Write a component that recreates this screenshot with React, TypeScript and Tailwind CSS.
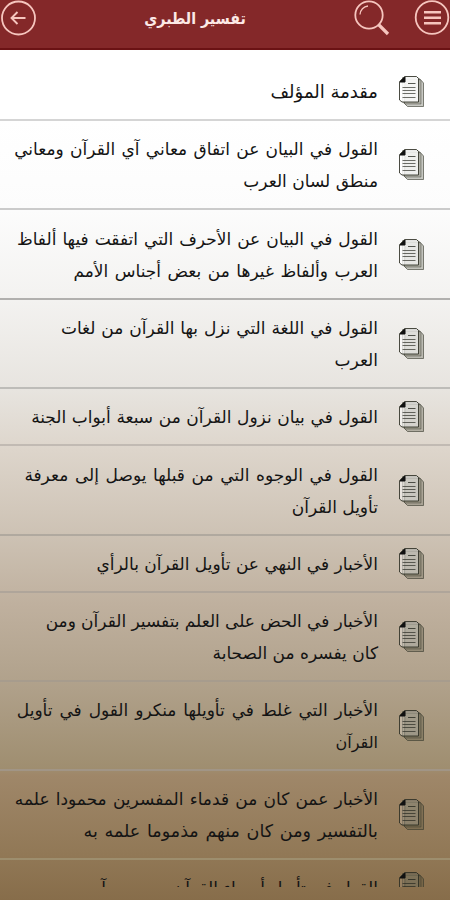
import React from 'react';

type Line = { text: string; className?: string };

type Chapter = {
  id: number;
  lines: Line[];
  height: string;
  border: string;
};

const chapters: Chapter[] = [
  {
    id: 1, height: 'h-[57px]', border: 'bg-[#cbcbcb]',
    lines: [{ text: 'مقدمة المؤلف', className: 'text-[18px]' }],
  },
  {
    id: 2, height: 'h-[89px]', border: 'bg-[#bebebe]',
    lines: [
      { text: 'القول في البيان عن اتفاق معاني آي القرآن ومعاني', className: '[word-spacing:0.9px]' },
      { text: 'منطق لسان العرب' },
    ],
  },
  {
    id: 3, height: 'h-[90px]', border: 'bg-[#a09f9e]',
    lines: [
      { text: 'القول في البيان عن الأحرف التي اتفقت فيها ألفاظ', className: '[word-spacing:0.6px]' },
      { text: 'العرب وألفاظ غيرها من بعض أجناس الأمم', className: '[word-spacing:1.1px]' },
    ],
  },
  {
    id: 4, height: 'h-[89px]', border: 'bg-[#b3b1ae]',
    lines: [
      { text: 'القول في اللغة التي نزل بها القرآن من لغات', className: '[word-spacing:0.5px]' },
      { text: 'العرب' },
    ],
  },
  {
    id: 5, height: 'h-[57px]', border: 'bg-[#b9b3ac]',
    lines: [{ text: 'القول في بيان نزول القرآن من سبعة أبواب الجنة', className: '[word-spacing:0.2px]' }],
  },
  {
    id: 6, height: 'h-[90px]', border: 'bg-[#a9a29a]',
    lines: [
      { text: 'القول في الوجوه التي من قبلها يوصل إلى معرفة', className: '[word-spacing:1.2px]' },
      { text: 'تأويل القرآن' },
    ],
  },
  {
    id: 7, height: 'h-[57px]', border: 'bg-[#aaa198]',
    lines: [{ text: 'الأخبار في النهي عن تأويل القرآن بالرأي' }],
  },
  {
    id: 8, height: 'h-[89px]', border: 'bg-[#a59b8d]',
    lines: [
      { text: 'الأخبار في الحض على العلم بتفسير القرآن ومن', className: '[word-spacing:-0.2px]' },
      { text: 'كان يفسره من الصحابة' },
    ],
  },
  {
    id: 9, height: 'h-[89px]', border: 'bg-[#a1978c]',
    lines: [
      { text: 'الأخبار التي غلط في تأويلها منكرو القول في تأويل', className: '[word-spacing:1.5px]' },
      { text: 'القرآن', className: 'text-[16px]' },
    ],
  },
  {
    id: 10, height: 'h-[89px]', border: 'bg-[#a09474]',
    lines: [
      { text: 'الأخبار عمن كان من قدماء المفسرين محمودا علمه', className: '[word-spacing:0.8px]' },
      { text: 'بالتفسير ومن كان منهم مذموما علمه به', className: 'text-[17.5px] [word-spacing:1.2px]' },
    ],
  },
  {
    id: 11, height: 'h-[57px]', border: 'bg-[#a09474]',
    lines: [{ text: 'القول في تأويل أسماء القرآن وسوره وآيه', className: '[word-spacing:-0.3px]' }],
  },
];

// paper gets less opaque further down the list
function PagesIcon({ paper }: { paper: number }) {
  return (
    <svg width="27" height="33" viewBox="0 0 27 33" fill="none" className="shrink-0">
      <path d="M7 4h15l3.500 4v23.500h-16l-3-3z" fill="#4a4c38" fillOpacity=".3" stroke="#33352a" strokeOpacity=".6" />
      <path d="M4.500 2.500h15.500l3 4v22.500h-15.500l-3-2z" fill="#4a4c38" fillOpacity=".2" stroke="#33352a" strokeOpacity=".4" />
      <path d="M6.500 1.500H18.500L20.500 3.500V27H4L1.500 25V6.500z" fill="#fff" fillOpacity={paper} stroke="#2b2d22" strokeOpacity=".85" />
      <path d="M2 7 7 2v5z" fill="#111" stroke="#111" />
      <path d="M10 8.500h7.500" stroke="#22241c" strokeOpacity=".75" />
      <path d="M4.500 12.500h13M4.500 15.500h13M4.500 18.500h13M4.500 22.500h13" stroke="#22241c" strokeOpacity=".65" />
    </svg>
  );
}

function Header() {
  return (
    <header className="flex h-[50px] shrink-0 items-start border-b-2 border-[#6b1214] bg-[#842829] text-[#f6c5be]">
      <button className="h-9 w-9">
        <svg width="36" height="36" viewBox="0 0 36 36" fill="none" stroke="currentColor">
          <circle cx="18" cy="17.500" r="16.300" strokeWidth="1.800" />
          <path d="M10 12.300h17M10 17.800h17M10 23.300h17" strokeWidth="2.600" />
        </svg>
      </button>
      <button className="mr-6 h-9 w-9">
        <svg width="36" height="36" viewBox="0 0 36 36" fill="none" stroke="currentColor">
          <circle cx="15" cy="15" r="13.700" strokeWidth="1.800" />
          <path d="M6 14.500a9 9 0 0 1 8-8.500" strokeWidth="1.300" />
          <path d="M24.500 24.500 34 34" strokeWidth="3.200" />
        </svg>
      </button>
      <h1 className="grow scale-x-[0.89] whitespace-nowrap text-center text-[16px] font-bold leading-[38px] text-[#fce9e6]">
        تفسير الطبري
      </h1>
      <button className="h-9 w-9">
        <svg width="36" height="36" viewBox="0 0 36 36" fill="none" stroke="currentColor">
          <circle cx="18.500" cy="18" r="16.500" strokeWidth="1.800" />
          <path d="M25.500 18H12M17.500 12l-6 6 6 6" strokeWidth="1.900" />
        </svg>
      </button>
    </header>
  );
}

export default function App() {
  return (
    <div
      dir="rtl"
      className="flex h-[900px] w-[450px] flex-col overflow-hidden bg-linear-[180deg,#fff_0,#fff_120px,#fcfcfc_210px,#f3f2f0_300px,#e7e4df_390px,#ddd5cb_450px,#cdc2b4_535px,#bfb09e_605px,#b1a28c_680px,#9f8e70_768px,#9f8769_775px,#917856_855px,#876d4a_900px] font-['DejaVu_Sans',sans-serif]"
    >
      <Header />
      <main className="h-[837px] shrink-0 overflow-hidden pt-[14px] text-[17px] text-[#141414]">
        {chapters.map((chapter) => (
          <div key={chapter.id} className={`flex flex-col ${chapter.height}`}>
            <div className="flex grow items-center pr-[25px]">
              <PagesIcon paper={0.95 - chapter.id * 0.077} />
              <div className="pr-5 pt-px">
                {chapter.lines.map((line) => (
                  <p key={line.text} className="h-8 whitespace-nowrap leading-8">
                    <span className={line.className}>{line.text}</span>
                  </p>
                ))}
              </div>
            </div>
            <div className={`h-0.5 shrink-0 opacity-80 ${chapter.border}`} />
          </div>
        ))}
      </main>
    </div>
  );
}
